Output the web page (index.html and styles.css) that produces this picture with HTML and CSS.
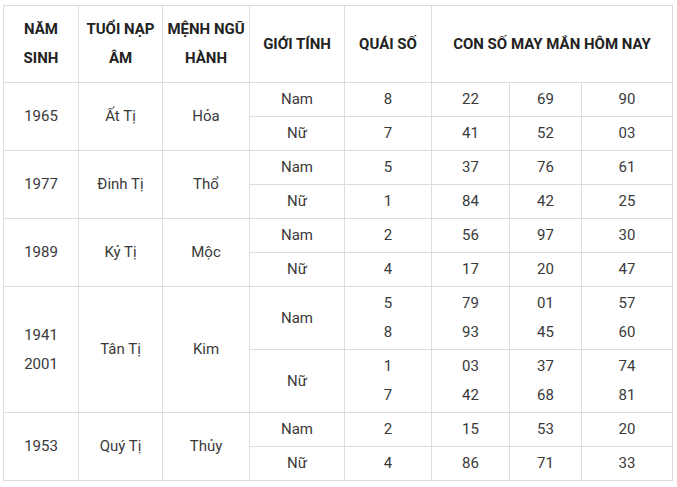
FILE: index.html
```html
<!DOCTYPE html>
<html lang="vi">
<head>
<meta charset="utf-8">
<link rel="stylesheet" href="styles.css">
</head>
<body>
<table class="lucky">
  <colgroup>
    <col class="c1"><col class="c2"><col class="c3"><col class="c4"><col class="c5"><col class="c6"><col class="c7"><col class="c8">
  </colgroup>
  <thead>
    <tr>
      <th>NĂM<br>SINH</th>
      <th>TUỔI NẠP<br>ÂM</th>
      <th>MỆNH NGŨ<br>HÀNH</th>
      <th>GIỚI TÍNH</th>
      <th>QUÁI SỐ</th>
      <th colspan="3">CON SỐ MAY MẮN HÔM NAY</th>
    </tr>
  </thead>
  <tbody>
    <tr><td rowspan="2">1965</td><td rowspan="2">Ất Tị</td><td rowspan="2">Hỏa</td><td>Nam</td><td>8</td><td>22</td><td>69</td><td>90</td></tr>
    <tr><td>Nữ</td><td>7</td><td>41</td><td>52</td><td>03</td></tr>
    <tr><td rowspan="2">1977</td><td rowspan="2">Đinh Tị</td><td rowspan="2">Thổ</td><td>Nam</td><td>5</td><td>37</td><td>76</td><td>61</td></tr>
    <tr><td>Nữ</td><td>1</td><td>84</td><td>42</td><td>25</td></tr>
    <tr><td rowspan="2">1989</td><td rowspan="2">Kỷ Tị</td><td rowspan="2">Mộc</td><td>Nam</td><td>2</td><td>56</td><td>97</td><td>30</td></tr>
    <tr><td>Nữ</td><td>4</td><td>17</td><td>20</td><td>47</td></tr>
    <tr><td rowspan="2">1941<br>2001</td><td rowspan="2">Tân Tị</td><td rowspan="2">Kim</td><td>Nam</td><td>5<br>8</td><td>79<br>93</td><td>01<br>45</td><td>57<br>60</td></tr>
    <tr><td>Nữ</td><td>1<br>7</td><td>03<br>42</td><td>37<br>68</td><td>74<br>81</td></tr>
    <tr><td rowspan="2">1953</td><td rowspan="2">Quý Tị</td><td rowspan="2">Thủy</td><td>Nam</td><td>2</td><td>15</td><td>53</td><td>20</td></tr>
    <tr><td>Nữ</td><td>4</td><td>86</td><td>71</td><td>33</td></tr>
  </tbody>
</table>
</body>
</html>
```
FILE: styles.css
```css
html, body {
  margin: 0;
  padding: 0;
  background: #ffffff;
}
body {
  padding: 5px 0 0 3px;
  font-family: Roboto, "Liberation Sans", Arial, sans-serif;
  font-size: 15px;
  color: #333333;
}
.lucky {
  border-collapse: collapse;
  table-layout: fixed;
  width: 669px;
}
.c1 { width: 75px; }
.c2 { width: 84px; }
.c3 { width: 87px; }
.c4 { width: 95px; }
.c5 { width: 87px; }
.c6 { width: 78px; }
.c7 { width: 72px; }
.c8 { width: 91px; }
.lucky th,
.lucky td {
  border: 1px solid #dddddd;
  text-align: center;
  vertical-align: middle;
  line-height: 29px;
  padding: 2px 4px;
}
.lucky th {
  font-weight: 700;
  color: #222222;
  padding: 9px 4px;
}
.lucky td {
  color: #3a3a3a;
}
```
